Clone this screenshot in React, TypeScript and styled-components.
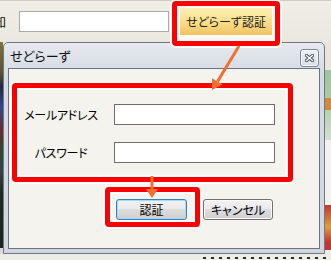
import React from "react";
import styled, { createGlobalStyle } from "styled-components";

const Global = createGlobalStyle`
  html, body { margin: 0; padding: 0; }
  body {
    font-family: "Noto Sans CJK JP", "Noto Sans", sans-serif;
    background: #eeebe3;
  }
`;

const Screen = styled.div`
  position: relative;
  width: 331px;
  height: 260px;
  overflow: hidden;
  background: #eeebe3;
  font-family: "Noto Sans CJK JP", "Noto Sans", sans-serif;
  font-feature-settings: "palt";
  color: #000;
`;

const TopBar = styled.div`
  height: 42px;
  box-sizing: border-box;
  border-top: 1px solid #cfcbc0;
  display: flex;
  align-items: center;
  background: linear-gradient(#f0ede5, #ebe8df);
`;

const EdgeGlyph = styled.span`
  width: 25px;
  margin-left: -6px;
  font-size: 12px;
  line-height: 1;
`;

const SearchInput = styled.div`
  width: 150px;
  height: 21px;
  box-sizing: border-box;
  border: 1px solid #a7abb0;
  background: #fff;
`;

const Lower = styled.div`
  display: flex;
  height: 212px;
`;

const LeftStrip = styled.div`
  width: 3px;
  background: linear-gradient(
    #7e7338 0px,
    #5b5430 30px,
    #1f2846 45px,
    #34488a 65px,
    #6a2a2a 90px,
    #2e4a30 110px,
    #3a3f46 130px,
    #1e2c1f 150px,
    #1a261a 206px,
    #dcdad2 206px
  );
`;

const RightStrip = styled.div`
  width: 6px;
  background: linear-gradient(
    #e9e5da 0px,
    #e9e5da 28px,
    #9fc59c 28px,
    #a8cca3 56px,
    #d5873a 56px,
    #d5873a 68px,
    #b3d3ad 68px,
    #cfe3cb 98px,
    #f3f2ee 98px,
    #f3f2ee 163px,
    #c8342c 163px,
    #d9a040 185px,
    #c8342c 200px,
    #c8342c 208px,
    #eeece6 208px
  );
`;

const Dialog = styled.div`
  width: 322px;
  height: 212px;
  box-sizing: border-box;
  border: 1px solid #6f7787;
  border-radius: 5px 5px 0 0;
  background: linear-gradient(#e6e9ee, #d6dce5 30px, #cfd6e0);
  padding: 0 4px 4px 4px;
  display: flex;
  flex-direction: column;
`;

const TitleBar = styled.div`
  height: 25px;
  display: flex;
  align-items: center;
  justify-content: space-between;
  padding-left: 2px;
`;

const TitleText = styled.span`
  font-size: 13px;
  line-height: 1;
  color: #111;
`;

const CloseButton = styled.div`
  align-self: flex-end;
  margin-bottom: 1px;
  margin-right: 1px;
  width: 19px;
  height: 18px;
  box-sizing: border-box;
  border: 1px solid #7d8798;
  border-radius: 3px;
  background: linear-gradient(#eef0f4, #d9dee5);
  box-shadow: inset 0 0 0 1px #f6f8fa;
  display: flex;
  align-items: center;
  justify-content: center;
`;

const Client = styled.div`
  flex: 1;
  box-sizing: border-box;
  border: 1px solid #6a7385;
  background: #f4f3ee;
  padding: 14px 0 0 3px;
  display: flex;
  flex-direction: column;
  align-items: flex-start;
`;

const FormBox = styled.div`
  width: 281px;
  height: 99px;
  box-sizing: border-box;
  border: 5px solid #f00;
  border-radius: 4px;
  box-shadow: 0 0 0 2px #fff, inset 0 0 0 2px #fff;
  padding: 16px 13px 14px 0;
  display: grid;
  grid-template-columns: 88px 161px;
  column-gap: 9px;
  row-gap: 17px;
  align-items: center;
`;

const FieldLabel = styled.span`
  justify-self: center;
  font-size: 12px;
  line-height: 1;
  letter-spacing: -0.3px;
`;

const TextField = styled.div`
  height: 21px;
  box-sizing: border-box;
  border: 1px solid #6e6e6e;
  background: #fff;
`;

const ButtonRow = styled.div`
  margin-top: 5px;
  margin-left: 93px;
  display: flex;
  align-items: flex-start;
`;

const ButtonFrame = styled.div`
  border: 5px solid #f00;
  border-radius: 4px;
  box-shadow: 0 0 0 2px #fff, inset 0 0 0 2px #fff;
  padding: 7px 8px 2px 6px;
  background: #f4f3ee;
`;

const PushButton = styled.div<{ $primary?: boolean; $w: number }>`
  width: ${(p) => p.$w}px;
  height: 21px;
  box-sizing: border-box;
  border: 1px solid ${(p) => (p.$primary ? "#3c7fb1" : "#707070")};
  border-radius: 3px;
  background: linear-gradient(#f2f2f2 0%, #ebebeb 45%, #dddddd 50%, #cfcfcf 100%);
  box-shadow: ${(p) => (p.$primary ? "inset 0 0 0 1px #9fdcf8" : "inset 0 0 0 1px #fbfbfb")};
  display: flex;
  align-items: center;
  justify-content: center;
  font-size: 12px;
  line-height: 1;
  color: #000;
`;

const CancelSlot = styled.div`
  margin-top: 12px;
  margin-left: 3px;
`;

const BottomStrip = styled.div`
  height: 6px;
  background: #eeece6;
  padding-top: 3px;
  box-sizing: border-box;
`;

const DotRow = styled.div`
  margin-left: 203px;
  height: 2px;
  background: repeating-linear-gradient(90deg, #2e2e2e 0 3px, transparent 3px 8px);
`;

const Callout = styled.div`
  position: absolute;
  left: 172px;
  top: 1px;
  width: 108px;
  height: 45px;
  box-sizing: border-box;
  border: 5px solid #f00;
  border-radius: 4px;
  box-shadow: 0 0 0 2px #fff;
  background: #fafafa;
  padding: 2px 3px 6px 3px;
  display: flex;
`;

const CalloutFace = styled.div`
  flex: 1;
  display: flex;
  align-items: center;
  justify-content: center;
  background: linear-gradient(#fdf0b4 0%, #f9dc86 55%, #f2c262 100%);
  font-size: 12px;
  line-height: 1;
  color: #222;
`;

const Overlay = styled.svg`
  position: absolute;
  left: 0;
  top: 0;
  pointer-events: none;
`;

const ORANGE = "#f26f2e";

export default function App() {
  return (
    <>
      <Global />
      <Screen>
        <TopBar>
          <EdgeGlyph>知</EdgeGlyph>
          <SearchInput />
        </TopBar>
        <Lower>
          <LeftStrip />
          <Dialog>
            <TitleBar>
              <TitleText>せどらーず</TitleText>
              <CloseButton>
                <svg width="9" height="8" viewBox="0 0 9 8">
                  <path d="M1.5 1.5 L7.5 6.5 M7.5 1.5 L1.5 6.5" stroke="#3f4757" strokeWidth="3.2" strokeLinecap="square" />
                  <path d="M1.5 1.5 L7.5 6.5 M7.5 1.5 L1.5 6.5" stroke="#ffffff" strokeWidth="1.4" strokeLinecap="square" />
                </svg>
              </CloseButton>
            </TitleBar>
            <Client>
              <FormBox>
                <FieldLabel>メールアドレス</FieldLabel>
                <TextField />
                <FieldLabel>パスワード</FieldLabel>
                <TextField />
              </FormBox>
              <ButtonRow>
                <ButtonFrame>
                  <PushButton $primary $w={71}>認証</PushButton>
                </ButtonFrame>
                <CancelSlot>
                  <PushButton $w={70}>キャンセル</PushButton>
                </CancelSlot>
              </ButtonRow>
            </Client>
          </Dialog>
          <RightStrip />
        </Lower>
        <BottomStrip>
          <DotRow />
        </BottomStrip>
        <Callout>
          <CalloutFace>せどらーず認証</CalloutFace>
        </Callout>
        <Overlay width="331" height="260" viewBox="0 0 331 260">
          <line x1="239" y1="46" x2="217.5" y2="81.5" stroke={ORANGE} strokeWidth="3" />
          <polygon points="212,90 222.5,84.6 212.1,78.2" fill={ORANGE} />
          <line x1="152" y1="176" x2="152" y2="190" stroke={ORANGE} strokeWidth="3" />
          <polygon points="146,189 158,189 152,198" fill={ORANGE} />
        </Overlay>
      </Screen>
    </>
  );
}
